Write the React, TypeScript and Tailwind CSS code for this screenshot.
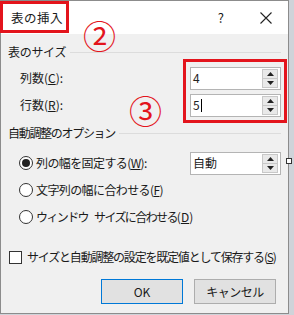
import React from "react";

const font = { fontFamily: '"Noto Sans CJK JP", "Noto Sans", sans-serif' };

function Spin({ value, caret }: { value: string; caret?: boolean }) {
  return (
    <div className="flex h-[23px] w-[91px] items-center border border-[#b4b4b4] bg-white">
      <div className="flex flex-1 items-center pl-[2px] text-[12px] text-[#222]">
        {value}
        {caret && <span className="ml-[1px] inline-block h-[13px] w-px bg-black" />}
      </div>
      <div className="mr-[2px] flex h-[19px] w-[16px] flex-col border border-[#c8c8c8] bg-[#e9e9e9]">
        <div className="flex flex-1 items-center justify-center border-b border-[#c8c8c8]">
          <svg width="7" height="4" viewBox="0 0 7 4"><path d="M0 4 L3.5 0 L7 4Z" fill="#222" /></svg>
        </div>
        <div className="flex flex-1 items-center justify-center">
          <svg width="7" height="4" viewBox="0 0 7 4"><path d="M0 0 L3.5 4 L7 0Z" fill="#222" /></svg>
        </div>
      </div>
    </div>
  );
}

function Radio({ checked }: { checked?: boolean }) {
  return (
    <span className="flex h-[14px] w-[14px] shrink-0 items-center justify-center rounded-full border border-[#333] bg-white">
      {checked && <span className="h-[8px] w-[8px] rounded-full bg-[#222]" />}
    </span>
  );
}

export default function App() {
  return (
    <div className="relative h-[315px] w-[294px] overflow-hidden bg-[#cfd3d9] text-[12px] leading-[20px] text-[#1a1a1a]" style={font}>
      <div className="flex h-[314px] w-[289px] flex-col border border-[#8c8c8c] bg-[#f0f0f0]">
        {/* title bar */}
        <div className="flex h-[33px] items-center bg-white pl-[10px] pr-[16px]">
          <span className="text-[12.5px] tracking-[0.5px]">表の挿入</span>
          <span className="ml-auto mr-[36px] text-[13px]">?</span>
          <svg width="12" height="12" viewBox="0 0 12 12"><path d="M0.5 0.5 L11.5 11.5 M11.5 0.5 L0.5 11.5" stroke="#222" strokeWidth="1.1" /></svg>
        </div>
        {/* body */}
        <div className="flex flex-col px-[7px] pt-[8px]">
          <div className="flex h-[20px] items-center gap-[4px]">
            <span className="tracking-[-0.3px]">表のサイズ</span>
            <div className="h-px flex-1 bg-[#dcdcdc]" />
          </div>
          <div className="mt-[4px] flex h-[24px] items-center justify-between pl-[12px]">
            <span>列数(<span className="underline">C</span>):</span>
            <Spin value="4" />
          </div>
          <div className="mt-[3px] flex h-[24px] items-center justify-between pl-[12px]">
            <span>行数(<span className="underline">R</span>):</span>
            <Spin value="5" caret />
          </div>
          <div className="mt-[6px] flex h-[20px] items-center gap-[4px]">
            <span className="tracking-[-1.3px]">自動調整のオプション</span>
            <div className="h-px flex-1 bg-[#dcdcdc]" />
          </div>
          <div className="mt-[8px] flex h-[24px] items-center pl-[11px]">
            <Radio checked />
            <span className="ml-[3px] tracking-[-0.6px]">列の幅を固定する(<span className="underline">W</span>):</span>
            <div className="ml-auto"><Spin value="自動" /></div>
          </div>
          <div className="mt-[5px] flex h-[20px] items-center pl-[11px]">
            <Radio />
            <span className="ml-[3px] tracking-[-0.6px]">文字列の幅に合わせる(<span className="underline">F</span>)</span>
          </div>
          <div className="mt-[7px] flex h-[20px] items-center pl-[11px]">
            <Radio />
            <span className="ml-[3px] whitespace-pre">
              <span className="tracking-[-1.6px]">ウィンドウ</span>
              <span className="inline-block w-[6px]" />
              <span className="tracking-[-1.6px]">サイズに合わせる</span>
              <span>(<span className="underline">D</span>)</span>
            </span>
          </div>
          <div className="mt-[20px] flex h-[20px] items-center pl-[1px]">
            <span className="h-[13px] w-[13px] border border-[#333] bg-white" />
            <span className="ml-[5px] tracking-[-1.2px]">サイズと自動調整の設定を既定値として保存する(<span className="underline">S</span>)</span>
          </div>
          <div className="mt-[12px] flex justify-end gap-[11px] pr-[5px]">
            <div className="flex h-[25px] w-[82px] items-center justify-center border border-[#0078d7] bg-[#e1e1e1]">OK</div>
            <div className="flex h-[25px] w-[82px] items-center justify-center border border-[#adadad] bg-[#e1e1e1] tracking-[-0.5px]">キャンセル</div>
          </div>
        </div>
      </div>
      {/* resize handle mark */}
      <div className="absolute left-[286px] top-[158px] h-[6px] w-[6px] border border-[#333] bg-white" />
      {/* annotations */}
      <div className="absolute left-0 top-[1px] h-[32px] w-[69px] border-[3px] border-[#e3141c]" />
      <div className="absolute left-[183px] top-[59px] h-[64px] w-[104px] border-[3px] border-[#e3141c]" />
      <span className="absolute left-[83px] top-[19px] text-[33px] leading-none text-[#e3141c]">②</span>
      <span className="absolute left-[129px] top-[94px] text-[33px] leading-none text-[#e3141c]">③</span>
    </div>
  );
}
